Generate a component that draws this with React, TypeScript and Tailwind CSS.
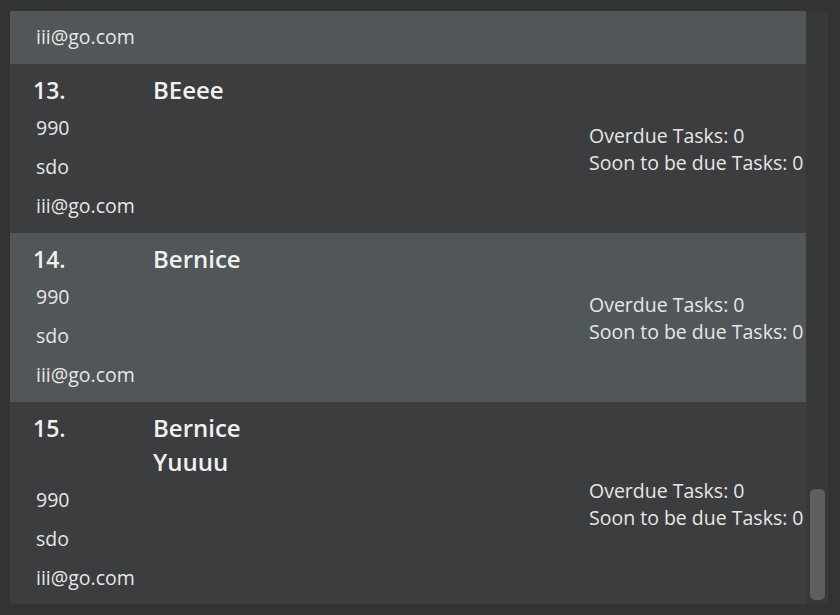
import React from "react";

type Person = {
    index?: number;
    name?: string[];
    phone?: string;
    address?: string;
    email: string;
    partial?: boolean;
};

const people: Person[] = [
    { email: "iii@go.com", partial: true },
    { index: 13, name: ["BEeee"], phone: "990", address: "sdo", email: "iii@go.com" },
    { index: 14, name: ["Bernice"], phone: "990", address: "sdo", email: "iii@go.com" },
    { index: 15, name: ["Bernice", "Yuuuu"], phone: "990", address: "sdo", email: "iii@go.com" },
];

function PersonCard({ p, odd }: { p: Person; odd: boolean }) {
    const bg = odd ? "bg-[#515658]" : "bg-[#3c3d3f]";
    if (p.partial) {
        return (
            <div className={`${bg} h-[53px] shrink-0 flex items-end pb-[8px] pl-[26px]`}>
                <span className="text-[19.5px] leading-[39px] text-[#e6e6e6]">{p.email}</span>
            </div>
        );
    }
    return (
        <div className={`${bg} shrink-0 flex items-center`}>
            <div className="flex-1 pl-[23px] pt-[9px] pb-[8px]">
                <div className="flex">
                    <span className="w-[120px] text-[23px] leading-[34px] font-semibold text-[#f0f0f0]">{p.index}.</span>
                    <div className="flex flex-col">
                        {p.name!.map((n) => (
                            <span key={n} className="text-[24px] leading-[34px] font-semibold text-[#f0f0f0]">
                                {n}
                            </span>
                        ))}
                    </div>
                </div>
                <div className="flex flex-col pl-[3px] mt-[1px] text-[19.5px] leading-[39px] text-[#e6e6e6]">
                    <span>{p.phone}</span>
                    <span>{p.address}</span>
                    <span>{p.email}</span>
                </div>
            </div>
            <div className="w-[217px] shrink-0 overflow-hidden whitespace-nowrap text-[19.5px] leading-[27px] text-[#e6e6e6]">
                <div>Overdue Tasks: 0</div>
                <div>Soon to be due Tasks: 0</div>
            </div>
        </div>
    );
}

export default function App() {
    return (
        <div className="w-[840px] h-[615px] bg-[#333333] pt-[11px] pl-[10px] pr-[10px] pb-[11px] font-['Open_Sans',sans-serif]">
            <div className="flex h-[593px]">
                <div className="w-[796px] flex flex-col overflow-hidden bg-[#3c3d3f]">
                    {people.map((p, i) => (
                        <PersonCard key={i} p={p} odd={i % 2 === 0} />
                    ))}
                </div>
                <div className="w-[24px] bg-[#383838] border-r border-[#2e2e2e] relative">
                    <div className="absolute left-[4px] right-[4px] top-[478px] bottom-[4px] rounded-[5px] bg-[#5f5f5f]" />
                </div>
            </div>
        </div>
    );
}
